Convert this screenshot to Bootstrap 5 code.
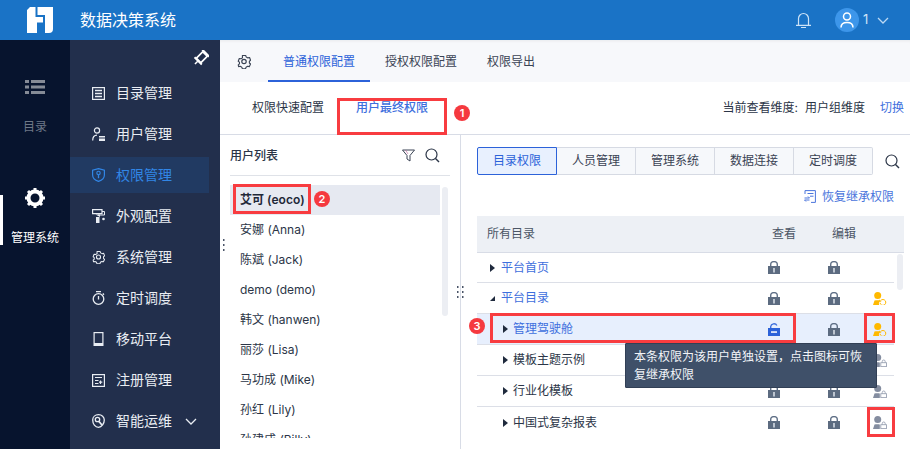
<!DOCTYPE html>
<html lang="zh">
<head>
<meta charset="utf-8">
<title>数据决策系统</title>
<link href="https://cdn.jsdelivr.net/npm/bootstrap@5.3.0/dist/css/bootstrap.min.css" rel="stylesheet">
<style>
html,body{height:449px;overflow:hidden}
body{font-family:"Inter","Noto Sans CJK SC",sans-serif;font-size:12px;color:#2b3547;background:#fff;position:relative}
svg{display:block;flex:none}
.topbar{height:40px;background:#1a73c6;color:#fff;padding-left:27px;padding-right:21px}
.topbar-title{font-size:16px;margin-left:27px}
.avatar-dot{width:24px;height:24px;border-radius:50%;background:#3d96ea;margin-left:24px}
.user-num{font-size:13px;color:#cfe4f8;margin-left:4px;width:14px}
.shell{height:409px}
.rail{width:70px;background:#07142e;color:#6e7887}
.rail-list{padding-top:39px}
.rail-icon-a{margin-bottom:23px}
.rail-gear{height:60px;margin-top:51px;color:#fff;position:relative}
.rail-gear::before{content:"";position:absolute;left:0;top:8px;width:3px;height:50px;background:#fff}
.rail-icon-b{margin-bottom:20px}
.side{width:150px;background:#222f4c;color:#e9edf3;font-size:14px}
.pin-row{height:32.5px;padding:10px 11px 0 0}
.side-row{height:41px;padding-left:22px;margin-right:11px;gap:11px;line-height:1}
.side-row-on{background:#213a62;color:#3186e6;height:36px;margin-top:2.5px;margin-bottom:2.5px}
.chev-gap{margin-left:2px}
.main-col{width:690px}
.tabbar{height:42px;background:#f7f8fb;padding-left:17px;box-shadow:inset 0 3px 3px -2px #e8e9ec}
.tabbar-item{height:42px;padding:2px 15px 0;color:#3a4354}
.tabbar-gear{margin-right:17px}
.tabbar-on{color:#2c62d9;border-bottom:2px solid #2c62d9;padding-top:3px}
.subbar{height:53px;border-bottom:1px solid #d8dce6;padding:0 6px 1px 32px}
.subbar-one{width:104px}
.link-blue{color:#3e6fdd}
.mute-btn{margin-left:15px}
.dim-val{margin-left:7px}
.panels{height:314px}
.userpanel{width:241px;border-right:1px solid #d8dce6;padding:0 10px}
.userhead{height:41px;border-bottom:1px solid #dfe2e8;padding:1px 0 0;font-weight:500;color:#2b3547}
.filter-ic{margin-right:10px}
.search-ic{margin-right:10px}
.userlist{height:253px;margin-top:9px;overflow:hidden;width:210px}
.userrow{height:30px;padding-left:10px;flex:none}
.userrow-on{background:#e6e9f1;font-weight:600;color:#1f2838}
.track{width:6px;height:129px;background:#eceef3;border-radius:3px;margin:11px 0 0 2px}
.permpanel{width:449px;padding:12px 6px 0 16px}
.seg{height:28px}
.segbtn{width:79px;height:28px;background:#f6f8fb;border:1px solid #d6dae3;border-left-width:0;color:#3a4354}
.segbtn-first{width:80px;background:#e8f0fe;border:1px solid #2c62d9;color:#2c62d9;border-radius:2px 0 0 2px}
.segbtn-last{border-radius:0 2px 2px 0}
.seg-search{margin-left:12px}
.restore{height:41px;padding:2px 10px 0 0;color:#4a75dc;gap:6px}
.permhead{height:37px;background:#edf0f5;border-bottom:1px solid #d8dce6;padding-left:10px;color:#4b5565}
.col-name{flex:1 1 auto;min-width:0}
.col-act{width:60px;flex:none}
.col-tail{width:30px;flex:none;padding-left:9px}
.permrows{width:417px}
.permrow{height:31px;border-bottom:1px solid #dcdfe7;padding-left:13px}
.permrow-first{height:30px}
.permrow-sel{background:#e7effd}
.tri-ic{margin-right:6px}
.level2{padding-left:26px}
.level2 .tri-ic{margin-right:5px}
.name-link{color:#3e6fdd}
.rowtrack{position:absolute;left:897px;top:254px;width:6px;height:36px;background:#eceef3;border-radius:3px}
.redbox{position:absolute;border:3px solid #f83c40;pointer-events:none}
.redbox-a{left:337px;top:98px;width:110px;height:37px}
.redbox-b{left:233px;top:184px;width:78px;height:30px}
.redbox-c{left:490px;top:313px;width:306px;height:30px}
.redbox-d{left:864px;top:313px;width:31px;height:30px}
.redbox-e{left:867px;top:407px;width:28px;height:30px}
.dotnum{position:absolute;width:16px;height:16px;border-radius:50%;background:#f5393f;color:#fff;font-size:11px;font-weight:600;line-height:16px;text-align:center}
.dotnum-a{left:454px;top:105px}
.dotnum-b{left:314px;top:191px}
.dotnum-c{left:469px;top:318px}
.tipbox{position:absolute;left:625px;top:343px;width:252px;height:45px;background:#3f5069;border:1px solid #313f55;color:#f2f4f8;padding:4px 8px;line-height:18px;border-radius:1px}
.grip{position:absolute}
.grip-a{left:222px;top:239px}
.grip-b{left:456px;top:286px}
</style>
</head>
<body>
<svg width="0" height="0" class="position-absolute">
  <symbol id="lk" viewBox="0 0 12 13"><path d="M2.700 6V3.700a3.300 3.100 0 0 1 6.600 0V6" fill="none" stroke="#5f6f86" stroke-width="1.400"/><rect y="5" width="12" height="8" fill="#5c6b80"/><rect x="5.200" y="7" width="1.600" height="4.500" fill="#d5dbe4"/></symbol>
  <symbol id="ulk" viewBox="0 0 12 13"><path d="M2.700 6V3.500a3.300 3.100 0 0 1 6.200-1" fill="none" stroke="#3e6fdd" stroke-width="1.400"/><rect y="5" width="12" height="8" fill="#2c62d9"/><rect x="3" y="8.300" width="6" height="1.500" fill="#fff"/></symbol>
  <symbol id="tri" viewBox="0 0 5 8"><path d="M0 0l5 4-5 4z" fill="#1f2a3d"/></symbol>
  <symbol id="triopen" viewBox="0 0 6 6"><path d="M6 0v6H0z" fill="#1f2a3d"/></symbol>
  <symbol id="uy" viewBox="0 0 14 13"><circle cx="4.700" cy="3.600" r="3.500" fill="#ffb900"/><path d="M0 13l1.500-4.500C3 8 6 8 7.500 8.500 6 9.500 5.500 11 6.200 13z" fill="#ffb900"/><path d="M7.700 8.500a2.900 2.900 0 1 1-.7 2.200" fill="none" stroke="#ffb900" stroke-width="1"/><path d="M6.300 7.500l2.200 1.900-2.400.7z" fill="#ffb900"/></symbol>
  <symbol id="ug" viewBox="0 0 14 13"><circle cx="4.700" cy="3.600" r="3.500" fill="#848da0"/><path d="M0 13l1.500-4.500C3 8 5.500 8 6.800 8.500V13z" fill="#848da0"/><rect x="7.800" y="8.700" width="5.700" height="3.900" fill="none" stroke="#9aa2b3" stroke-width=".9"/><path d="M9.200 8.700V7.500a1.500 1.500 0 0 1 3 0v1.200" fill="none" stroke="#9aa2b3" stroke-width=".9"/></symbol>
  <symbol id="srch" viewBox="0 0 15 15"><circle cx="6.500" cy="6.500" r="5.500" fill="none" stroke="#2b3547" stroke-width="1.200"/><path d="M10.500 10.500L14 14" stroke="#2b3547" stroke-width="1.400"/></symbol>
  <symbol id="flower" viewBox="0 0 14 15"><path d="M5.200 1.200h3.600l.6 1.700 1.800.9 1.800-.4 1.100 3-1.300 1 0 1.900 1.300 1.100-1.400 2.900-1.800-.4-1.700 1-.6 1.800H5.200l-.6-1.800-1.700-1-1.800.4L.7 11.400 2 10.300V8.400L.7 7.400l1.100-3 1.800.4 1.700-1z" transform="translate(.6 .4) scale(.92)" fill="none" stroke="currentColor" stroke-width="1.200" stroke-linejoin="round"/><circle cx="7" cy="7.500" r="2.200" fill="none" stroke="currentColor" stroke-width="1.200"/></symbol>
</svg>

<header class="topbar d-flex align-items-center">
  <svg width="26" height="26" viewBox="0 0 26 26"><path d="M3 0H8.500V10H16V15.500H10V26H0V3z" fill="#fff"/><path d="M10.500 0H26V22a4 4 0 0 1-4 4H18V8H10.500z" fill="#fff"/></svg>
  <div class="topbar-title">数据决策系统</div>
  <svg class="ms-auto" width="15" height="16" viewBox="0 0 15 16"><path d="M2.500 13V6.500a5 5 0 0 1 10 0V13" fill="none" stroke="#cde3f7" stroke-width="1.200"/><path d="M0 13.300h15M5 15.500h5" stroke="#cde3f7" stroke-width="1.200"/></svg>
  <div class="avatar-dot d-flex align-items-center justify-content-center">
    <svg width="14" height="16" viewBox="0 0 14 16"><circle cx="7" cy="4.500" r="3.500" fill="none" stroke="#fff" stroke-width="1.500"/><path d="M1 15.500c0-3.500 2.500-5 6-5s6 1.500 6 5" fill="none" stroke="#fff" stroke-width="1.500"/></svg>
  </div>
  <div class="user-num">1</div>
  <svg width="12" height="7" viewBox="0 0 12 7"><path d="M1 1l5 5 5-5" fill="none" stroke="#bcd9f4" stroke-width="1.300"/></svg>
</header>

<div class="shell d-flex">
  <nav class="rail rail-list d-flex flex-column align-items-center text-center">
    <svg class="rail-icon-a" width="20" height="16" viewBox="0 0 20 16"><path d="M0 1h4v3H0zM6 1h14v3H6zM0 6.500h4v3H0zM6 6.500h14v3H6zM0 12h4v3H0zM6 12h14v3H6z" fill="#858b96"/></svg>
    <span>目录</span>
    <div class="rail-gear w-100 d-flex flex-column align-items-center">
      <svg class="rail-icon-b" width="22" height="22" viewBox="0 0 22 22"><circle cx="11" cy="11" r="6.500" fill="none" stroke="#fff" stroke-width="4"/><path d="M11 1v4M11 17v4M1 11h4M17 11h4M4 4l3 3M15 15l3 3M4 18l3-3M15 7l3-3" stroke="#fff" stroke-width="3"/></svg>
      <span>管理系统</span>
    </div>
  </nav>

  <aside class="side">
    <div class="pin-row d-flex justify-content-end">
      <svg width="16" height="16" viewBox="1 0 14 14"><g transform="rotate(45 8 7)" fill="none" stroke="#fff"><rect x="5.200" y="2" width="5.600" height="8" stroke-width="1.500"/><path d="M3.500 1h9M3.500 10.500h9" stroke-width="1.700"/><path d="M8 11v3.500" stroke-width="1.300"/></g></svg>
    </div>
    <div class="side-row d-flex align-items-center"><svg width="13" height="13" viewBox="0 0 13 13"><rect x=".6" y=".6" width="11.800" height="11.800" fill="none" stroke="#e9edf3" stroke-width="1.200"/><path d="M3 3.500h7M3 6.500h7M3 9.500h7" stroke="#e9edf3" stroke-width="1.300"/></svg>目录管理</div>
    <div class="side-row d-flex align-items-center"><svg width="13" height="14" viewBox="0 0 13 14"><circle cx="5" cy="3.500" r="2.600" fill="none" stroke="#e9edf3" stroke-width="1.200"/><path d="M.7 13.500c0-3.600 1.500-5.300 4.300-5.300" fill="none" stroke="#e9edf3" stroke-width="1.200"/><path d="M7 9h6v1.400H7zM7 11.500h6V14H7z" fill="#e9edf3"/></svg>用户管理</div>
    <div class="side-row side-row-on d-flex align-items-center"><svg width="13" height="14" viewBox="0 0 13 14"><path d="M6.500.6L12.400 2.200V7c0 3.200-2.800 5.400-5.900 6.400C3.400 12.400.6 10.200.6 7V2.200z" fill="none" stroke="#3186e6" stroke-width="1.200"/><circle cx="6.500" cy="5" r="1.700" fill="none" stroke="#3186e6" stroke-width="1.100"/><path d="M6.500 6.700v3.500" stroke="#3186e6" stroke-width="1.300"/></svg>权限管理</div>
    <div class="side-row d-flex align-items-center"><svg width="13" height="14" viewBox="0 0 13 14"><path d="M.6.600H10v4H.6z" fill="none" stroke="#e9edf3" stroke-width="1.200"/><path d="M3.500 5.500H8V8M4 8h3.500v6H4z" fill="#e9edf3"/><path d="M10 2.500h2.500V6H6" fill="none" stroke="#e9edf3"/><circle cx="11.500" cy="10" r="1.300" fill="#e9edf3"/></svg>外观配置</div>
    <div class="side-row d-flex align-items-center"><svg width="13" height="14" color="#e9edf3"><use href="#flower"/></svg>系统管理</div>
    <div class="side-row d-flex align-items-center"><svg width="13" height="14" viewBox="0 0 13 14"><circle cx="6.500" cy="8" r="5.300" fill="none" stroke="#e9edf3" stroke-width="1.300"/><path d="M4 .7h5M6.500 5v3.500M10.800 2.500l1.200 1.200" stroke="#e9edf3" stroke-width="1.300"/></svg>定时调度</div>
    <div class="side-row d-flex align-items-center"><svg width="13" height="14" viewBox="0 0 13 14"><rect x="2.100" y=".6" width="8.800" height="12.800" fill="none" stroke="#e9edf3" stroke-width="1.200"/><path d="M2 11h9v2.500H2z" fill="#e9edf3"/></svg>移动平台</div>
    <div class="side-row d-flex align-items-center"><svg width="13" height="13" viewBox="0 0 13 13"><rect x=".6" y=".6" width="11.800" height="11.800" fill="none" stroke="#e9edf3" stroke-width="1.200"/><path d="M3 3.500h7M3 6.500h3.500M3 9.500h3.500M8.500 6.500v3.500M7 8.200h3.300" stroke="#e9edf3" stroke-width="1.200"/></svg>注册管理</div>
    <div class="side-row d-flex align-items-center"><svg width="13" height="14" viewBox="0 0 13 14"><path d="M6.500.7c3.300 0 5.800 2.200 5.800 5.300 0 3.400-2.500 7.300-5.800 7.300C3.200 13.300.7 9.800.7 6 .7 2.900 3.200.7 6.500.7z" fill="none" stroke="#e9edf3" stroke-width="1.300"/><circle cx="5.500" cy="5.500" r="2.200" fill="none" stroke="#e9edf3" stroke-width="1.300"/><path d="M7 7.500l3 3.500" stroke="#e9edf3" stroke-width="1.800"/></svg><span>智能运维</span><svg class="chev-gap" width="12" height="7" viewBox="0 0 12 7"><path d="M1 1l5 5 5-5" fill="none" stroke="#e9edf3" stroke-width="1.300"/></svg></div>
  </aside>

  <main class="main-col d-flex flex-column">
    <div class="tabbar d-flex align-items-center">
      <svg class="tabbar-gear" width="14" height="15" color="#3a4354"><use href="#flower"/></svg>
      <div class="tabbar-item tabbar-on d-flex align-items-center">普通权限配置</div>
      <div class="tabbar-item d-flex align-items-center">授权权限配置</div>
      <div class="tabbar-item d-flex align-items-center">权限导出</div>
    </div>
    <div class="subbar d-flex align-items-center">
      <div class="subbar-one">权限快速配置</div>
      <div class="link-blue fw-medium">用户最终权限</div>
      <div class="ms-auto">当前查看维度:</div>
      <div class="dim-val">用户组维度</div>
      <div class="link-blue mute-btn">切换</div>
    </div>
    <div class="panels d-flex">
      <section class="userpanel">
        <div class="userhead d-flex align-items-center">
          <span>用户列表</span>
          <svg class="ms-auto filter-ic" width="13" height="13" viewBox="0 0 13 13"><path d="M.5 1h12L8 6.500V12L5 10V6.500z" fill="none" stroke="#3a4354" stroke-width="1"/><path d="M3.500 1L6 5" stroke="#c05a9a" stroke-width=".6"/></svg>
          <svg class="search-ic" width="15" height="15"><use href="#srch"/></svg>
        </div>
        <div class="d-flex">
          <div class="userlist d-flex flex-column">
            <div class="userrow userrow-on d-flex align-items-center">艾可 (eoco)</div>
            <div class="userrow d-flex align-items-center">安娜 (Anna)</div>
            <div class="userrow d-flex align-items-center">陈斌 (Jack)</div>
            <div class="userrow d-flex align-items-center">demo (demo)</div>
            <div class="userrow d-flex align-items-center">韩文 (hanwen)</div>
            <div class="userrow d-flex align-items-center">丽莎 (Lisa)</div>
            <div class="userrow d-flex align-items-center">马功成 (Mike)</div>
            <div class="userrow d-flex align-items-center">孙红 (Lily)</div>
            <div class="userrow d-flex align-items-center">孙建成 (Billy)</div>
          </div>
          <div class="track"></div>
        </div>
      </section>
      <section class="permpanel">
        <div class="seg d-flex align-items-center">
          <div class="segbtn segbtn-first d-flex align-items-center justify-content-center">目录权限</div>
          <div class="segbtn d-flex align-items-center justify-content-center">人员管理</div>
          <div class="segbtn d-flex align-items-center justify-content-center">管理系统</div>
          <div class="segbtn d-flex align-items-center justify-content-center">数据连接</div>
          <div class="segbtn segbtn-last d-flex align-items-center justify-content-center">定时调度</div>
          <svg class="seg-search" width="15" height="15"><use href="#srch"/></svg>
        </div>
        <div class="restore d-flex align-items-center justify-content-end">
          <svg width="12" height="13" viewBox="0 0 12 13"><path d="M1 4V.6h10.400v11.800H7" fill="none" stroke="#4a75dc"/><path d="M3.500 3.500h6M6 6.200h3.500M.5 8h5L4 6.500M5.500 10H.5L2 11.500" fill="none" stroke="#4a75dc"/></svg>
          <span>恢复继承权限</span>
        </div>
        <div class="permhead d-flex align-items-center">
          <div class="col-name">所有目录</div>
          <div class="col-act text-center">查看</div>
          <div class="col-act text-center">编辑</div>
          <div class="col-tail"></div>
        </div>
        <div class="permrows">
          <div class="permrow permrow-first d-flex align-items-center">
            <svg class="tri-ic" width="5" height="8"><use href="#tri"/></svg><div class="col-name name-link">平台首页</div>
            <div class="col-act"><svg class="mx-auto" width="12" height="13"><use href="#lk"/></svg></div>
            <div class="col-act"><svg class="mx-auto" width="12" height="13"><use href="#lk"/></svg></div>
            <div class="col-tail"></div>
          </div>
          <div class="permrow d-flex align-items-center">
            <svg class="tri-ic" width="5" height="5"><use href="#triopen"/></svg><div class="col-name name-link">平台目录</div>
            <div class="col-act"><svg class="mx-auto" width="12" height="13"><use href="#lk"/></svg></div>
            <div class="col-act"><svg class="mx-auto" width="12" height="13"><use href="#lk"/></svg></div>
            <div class="col-tail"><svg width="14" height="13"><use href="#uy"/></svg></div>
          </div>
          <div class="permrow permrow-sel level2 d-flex align-items-center">
            <svg class="tri-ic" width="5" height="8"><use href="#tri"/></svg><div class="col-name name-link">管理驾驶舱</div>
            <div class="col-act"><svg class="mx-auto" width="12" height="13"><use href="#ulk"/></svg></div>
            <div class="col-act"><svg class="mx-auto" width="12" height="13"><use href="#lk"/></svg></div>
            <div class="col-tail"><svg width="14" height="13"><use href="#uy"/></svg></div>
          </div>
          <div class="permrow level2 d-flex align-items-center">
            <svg class="tri-ic" width="5" height="8"><use href="#tri"/></svg><div class="col-name">模板主题示例</div>
            <div class="col-act"><svg class="mx-auto" width="12" height="13"><use href="#lk"/></svg></div>
            <div class="col-act"><svg class="mx-auto" width="12" height="13"><use href="#lk"/></svg></div>
            <div class="col-tail"><svg width="14" height="13"><use href="#ug"/></svg></div>
          </div>
          <div class="permrow level2 d-flex align-items-center">
            <svg class="tri-ic" width="5" height="8"><use href="#tri"/></svg><div class="col-name">行业化模板</div>
            <div class="col-act"><svg class="mx-auto" width="12" height="13"><use href="#lk"/></svg></div>
            <div class="col-act"><svg class="mx-auto" width="12" height="13"><use href="#lk"/></svg></div>
            <div class="col-tail"><svg width="14" height="13"><use href="#ug"/></svg></div>
          </div>
          <div class="permrow level2 border-0 d-flex align-items-center">
            <svg class="tri-ic" width="5" height="8"><use href="#tri"/></svg><div class="col-name">中国式复杂报表</div>
            <div class="col-act"><svg class="mx-auto" width="12" height="13"><use href="#lk"/></svg></div>
            <div class="col-act"><svg class="mx-auto" width="12" height="13"><use href="#lk"/></svg></div>
            <div class="col-tail"><svg width="14" height="13"><use href="#ug"/></svg></div>
          </div>
        </div>
      </section>
    </div>
  </main>
</div>

<div class="rowtrack"></div>
<div class="grip grip-a"><svg width="3" height="12" viewBox="0 0 3 12"><path d="M1 0h1.500v2H1zM1 5h1.500v2H1zM1 10h1.500v2H1z" fill="#4a5568"/></svg></div>
<div class="grip grip-b"><svg width="8" height="12" viewBox="0 0 8 12"><path d="M1 0h1.500v2H1zM1 5h1.500v2H1zM1 10h1.500v2H1zM6 0h1.500v2H6zM6 5h1.500v2H6zM6 10h1.500v2H6z" fill="#4a5568"/></svg></div>
<div class="tipbox">本条权限为该用户单独设置，点击图标可恢复继承权限</div>
<div class="redbox redbox-a"></div>
<div class="redbox redbox-b"></div>
<div class="redbox redbox-c"></div>
<div class="redbox redbox-d"></div>
<div class="redbox redbox-e"></div>
<div class="dotnum dotnum-a">1</div>
<div class="dotnum dotnum-b">2</div>
<div class="dotnum dotnum-c">3</div>
<script src="https://cdn.jsdelivr.net/npm/bootstrap@5.3.0/dist/js/bootstrap.bundle.min.js"></script>
</body>
</html>
